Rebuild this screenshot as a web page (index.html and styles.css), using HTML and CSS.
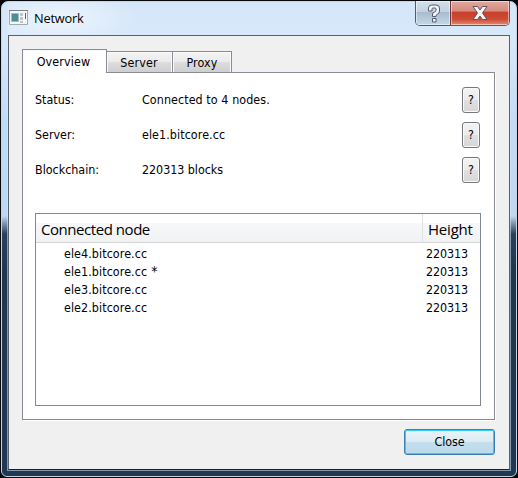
FILE: index.html
```html
<!DOCTYPE html>
<html lang="en">
<head>
<meta charset="utf-8">
<title>Network</title>
<link rel="stylesheet" href="styles.css">
</head>
<body>
<div class="window">
  <header class="titlebar">
    <svg class="app-icon" width="20" height="16" viewBox="0 0 20 16">
      <defs><linearGradient id="pic" x2="1" y2="1"><stop stop-color="#4b87b8"/><stop offset="1" stop-color="#4c9a68"/></linearGradient></defs>
      <path fill="#f5f7f8" stroke="#a3a9b0" d="M.5.5h18v14H.5z"/>
      <path fill="#7b848d" d="M0 0h19v1H0z"/>
      <path fill="url(#pic)" stroke="#a5bcc8" d="M2.5 3.5h7v8h-7z"/>
      <path fill="#c1c5ca" d="M11 3h3v3h-3zM11 7h3v3h-3zM11 11h3v2h-3z"/>
      <path fill="#347a67" d="M16 3h1v6h-1z"/>
    </svg>
    <h1 class="title">Network</h1>
    <div class="caption-buttons">
      <div class="caption help">
        <svg width="14" height="19" viewBox="0 0 14 19"><path fill="#f5f5f7" stroke="#555b70" stroke-linejoin="round" d="M1.500 7V4Q1.500 1 5 1H9Q12.500 1 12.500 4V7Q12.500 9.500 10.500 10Q9 10.500 9 12.500H5.500V10Q5.500 8.500 7.500 8Q9 7.500 9 6.500V5Q9 4 8 4H6Q5 4 5 5V7zM5.500 14.500H9V18H5.500z"/></svg>
      </div>
      <div class="caption close-x">
        <svg width="16" height="16" viewBox="0 0 16 16"><path fill="#f4f4f4" stroke="#61545f" stroke-linejoin="round" d="M1 1.500h4.500L8 5l2.500-3.500H15L10.500 8l4.500 6.500h-4.500L8 11l-2.500 3.500H1L5.500 8z"/></svg>
      </div>
    </div>
  </header>
  <main class="client">
    <nav class="tabs">
      <div class="tab active">Overview</div>
      <div class="tab server">Server</div>
      <div class="tab proxy">Proxy</div>
    </nav>
    <section class="pane">
      <div class="info"><span class="label">Status:</span><span class="value">Connected to 4 nodes.</span><button class="q">?</button></div>
      <div class="info"><span class="label">Server:</span><span class="value">ele1.bitcore.cc</span><button class="q">?</button></div>
      <div class="info"><span class="label">Blockchain:</span><span class="value blocks">220313 blocks</span><button class="q">?</button></div>
      <div class="list">
        <div class="list-head"><span class="name">Connected node</span><span class="height">Height</span></div>
        <div class="node"><span class="name">ele4.bitcore.cc</span><span class="height">220313</span></div>
        <div class="node"><span class="name">ele1.bitcore.cc <span class="star">*</span></span><span class="height">220313</span></div>
        <div class="node"><span class="name">ele3.bitcore.cc</span><span class="height">220313</span></div>
        <div class="node"><span class="name">ele2.bitcore.cc</span><span class="height">220313</span></div>
      </div>
    </section>
    <footer class="actions"><button class="close">Close</button></footer>
  </main>
</div>
</body>
</html>
```
FILE: styles.css
```css
* { box-sizing: border-box; }
html { background: #05070b; }
body {
  margin: 0;
  width: 518px;
  height: 478px;
  overflow: hidden;
  background: #05070b;
  font: 12.4px/18px "DejaVu Sans Condensed", "DejaVu Sans", sans-serif;
  font-stretch: condensed;
  letter-spacing: -.08px;
  color: #000;
}
button { font: inherit; letter-spacing: inherit; color: inherit; padding: 0; }
.window {
  width: 516px;
  height: 476px;
  margin: 1px;
  padding: 0 6px 7px;
  border: 1px solid #c5d6e2;
  border-radius: 7px 7px 6px 6px;
  background: linear-gradient(#d5e6f8 0, #d8e8fb 35px, #c1dbf7 120px, #bfd8f1 214px, #8299b1 221px, #29405b 232px, #203750 270px, #203852 100%);
}
.titlebar {
  height: 33px;
  display: flex;
  align-items: flex-start;
  padding-left: 1px;
  background: radial-gradient(ellipse 80px 28px at 50px 16px, #edf5fd 0, rgba(237,245,253,0) 100%);
}
.app-icon { display: block; margin-top: 8px; }
.title { margin: 7px 0 0 5px; font: 12.8px/18px "Open Sans", "Noto Sans", sans-serif; letter-spacing: -.2px; }
.caption-buttons {
  display: flex;
  margin-left: auto;
  width: 95px;
  height: 25px;
  margin-top: -1px;
  border: 1px solid #4e5c70;
  border-top: 0;
  border-radius: 0 0 5px 5px;
  overflow: hidden;
}
.caption { display: flex; justify-content: center; box-shadow: inset 0 0 0 1px rgba(255,255,255,.5); }
.help { width: 35px; padding-top: 3px; padding-left: 2px; background: linear-gradient(#d3dfec, #c3d0e0 45%, #a9bbcf 48%, #c3d8ec); border-right: 1px solid #6e3238; }
.close-x { flex: 1; padding-top: 4px; background: linear-gradient(#e0aaa1, #d58a7b 42%, #c53f2b 47%, #cf4b34 76%, #e08c70); }
.client {
  height: 435px;
  border: 1px solid #566271;
  border-bottom-color: #10202d;
  background: #f0f0f0;
  padding: 13px 14px 0 13px;
  box-shadow: 0 0 0 1px rgba(218,234,246,.55);
}
.tabs { height: 24px; display: flex; align-items: flex-end; }
.tab {
  position: relative;
  height: 22px;
  border: 1px solid #898c95;
  border-left: 0;
  background: linear-gradient(#f3f3f3, #ebebeb 48%, #dddddd 50%, #cfcfcf);
  box-shadow: inset 1px 1px #fafafa, inset -1px 0 #fafafa;
  text-align: center;
  line-height: 22px;
  letter-spacing: .12px;
}
.active { z-index: 1; width: 85px; height: 24px; padding-right: 2px; border-left: 1px solid #898c95; border-bottom: 0; background: #fff; line-height: 23px; letter-spacing: .15px; }
.server { width: 66px; padding-right: 1px; }
.proxy { width: 59px; }
.pane {
  height: 348px;
  margin-top: -1px;
  padding: 14px 13px 13px 12px;
  border: 1px solid #898c95;
  background: #fff;
  box-shadow: 1px 1px #fff;
}
.info { height: 26px; margin-bottom: 9px; display: flex; align-items: center; }
.label { width: 107px; letter-spacing: 0; }
.value { flex: 1; letter-spacing: .08px; }
.blocks { letter-spacing: -.04px; }
.q { width: 18px; height: 26px; margin-right: 1px; border: 1px solid #74777b; border-radius: 3px; background: linear-gradient(#f3f3f3, #ebebeb 49%, #e0e0e0 50%, #d6d6d6); box-shadow: inset 0 0 0 1px #fafafa; }
.list { margin-top: 30px; height: 193px; border: 1px solid #828790; }
.list-head {
  height: 29px;
  display: flex;
  margin-bottom: 2px;
  border-bottom: 1px solid #d5d5d5;
  background: linear-gradient(#fff 32%, #f7f8fa 33%, #f1f2f4);
  font: 15px/31px "Open Sans", "Noto Sans", sans-serif;
  letter-spacing: -.2px;
}
.list-head .name { flex: 1; padding-left: 5px; letter-spacing: -.45px; }
.list-head .height { width: 58px; padding-left: 5px; border-left: 1px solid #e1e2e4; }
.node { display: flex; height: 18px; }
.node .name { flex: 1; padding-left: 28px; letter-spacing: .08px; }
.star { font-size: 14px; line-height: 10px; margin-left: .5px; }
.node .height { width: 54px; }
.actions { display: flex; justify-content: flex-end; padding-top: 9px; }
.close {
  width: 91px;
  height: 26px;
  border: 1px solid #3c7fb1;
  border-radius: 3px;
  background: linear-gradient(#eaf4f9, #dcebf3 49%, #c5dfec 50%, #b8dbed);
  box-shadow: inset 0 0 0 1px #35cdf5;
}
```
